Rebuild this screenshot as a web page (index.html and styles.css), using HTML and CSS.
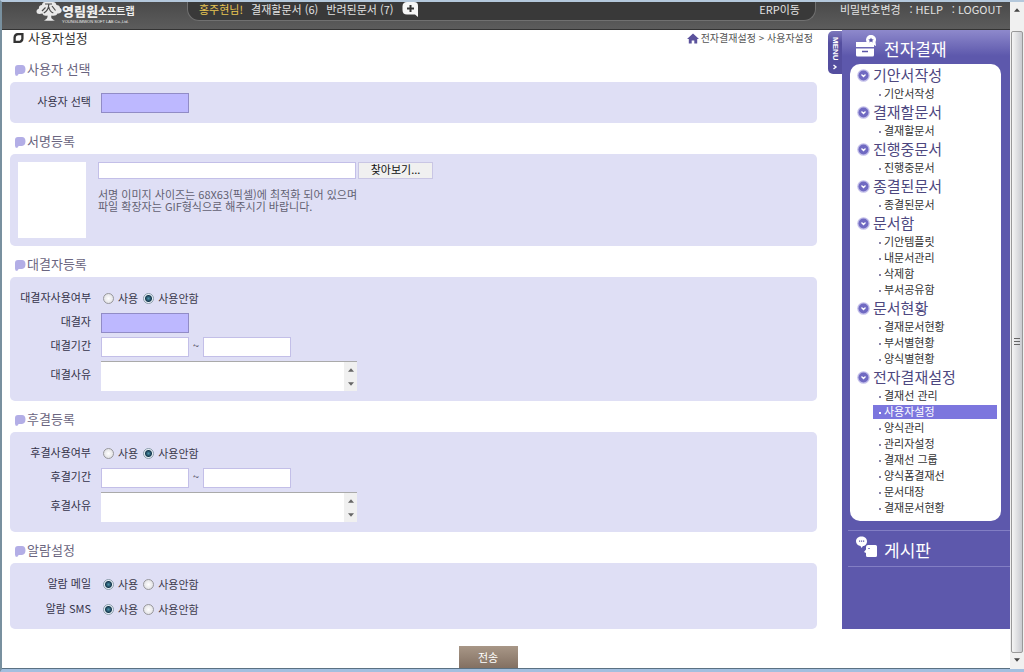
FILE: index.html
```html
<!DOCTYPE html>
<html lang="ko">
<head>
<meta charset="utf-8">
<title>사용자설정</title>
<link rel="stylesheet" href="styles.css">
</head>
<body>
<svg class="defs" aria-hidden="true">
  <symbol id="bubble" viewBox="0 0 12 12"><path d="M4 1h4c2 0 3.500 1.500 3.500 4.300S10 10 8 10H5.500c-1 0-1.600.4-2.200 2L1.500 11.500 1 9.500V4c0-2 1-3 3-3z" fill="#b3aee6"/></symbol>
  <symbol id="chevron" viewBox="0 0 13 13"><circle cx="6.500" cy="6.500" r="6.300" fill="#c4c0ea"/><circle cx="6.500" cy="6.500" r="5" fill="#706ac2"/><path d="M4.500 5.500l2 2 2-2" fill="none" stroke="#fff" stroke-width="1.300"/></symbol>
  <symbol id="up" viewBox="0 0 7 4"><path d="M0 4L3.500 0 7 4z" fill="currentColor"/></symbol>
  <symbol id="down" viewBox="0 0 7 4"><path d="M0 0h7L3.500 4z" fill="currentColor"/></symbol>
</svg>
<div class="window">
  <div class="page">
    <header class="topbar">
      <a class="logo" href="#">
        <svg class="logo-tree" viewBox="0 0 26 20" aria-hidden="true"><path d="M9 0h8c2 0 3 1 3.500 3 2 0 3.500 1 3.500 3 1.500.5 2 2 1.500 3.500-.6 1.500-2 2-4 2-1 2-3 2.500-6 2-.7 2-.3 3.500 3.500 5-4 .3-8 .3-11 0 2.500-1 4-3 3.500-5-2.500.5-4.500 0-5-2C3 12.500.5 12 .5 9.500.5 8 1.500 7 3 6.500 2.500 4.500 4 3 6 3 6 1.500 7 0 9 0z" fill="#e9e9e9"/><path d="M9 2h7M12.800 2c0 4-1.500 7-5 9M12.800 5c.5 3 2 5 4.500 6M9.500 5.500L6 9M16 4l3.500 4.500" fill="none" stroke="#4b4b4b" stroke-width="1.200"/></svg>
        <span class="logo-words">
          <span class="logo-name"><b>영림원</b><span>소프트랩</span></span>
          <span class="logo-sub">YOUNGLIMWON SOFT LAB Co.,Ltd.</span>
        </span>
      </a>
      <div class="pill">
        <span class="user">홍주현님!</span>
        <a href="#">결재할문서 (6)</a>
        <a href="#">반려된문서 (7)</a>
        <button class="add" type="button" aria-label="추가"><svg viewBox="0 0 17 15"><path d="M5 0h7c3 0 4 1.500 4 4v11l-3-2.500H5C2 12.500.500 11 .500 8V4.500C.500 1.500 2 0 5 0z" fill="#f6f6f6"/><path d="M8.500 3v7M5 6.500h7" stroke="#333" stroke-width="2"/></svg></button>
        <a class="erp" href="#">ERP이동</a>
      </div>
      <nav class="account"><a href="#">비밀번호변경</a><span><span>: </span><a href="#">HELP</a></span><span><span>: </span><a href="#">LOGOUT</a></span></nav>
    </header>

    <div class="columns">
      <main class="content">
        <div class="title-row">
          <h1><svg viewBox="0 0 12 12" aria-hidden="true"><path d="M5 .500h6.500v6C11.500 9.500 9.500 11.500 7 11.500H.500V5.500C.500 2.500 2.500.500 5 .500z" fill="#333"/><path d="M6 3h3v3.200C9 7.800 7.800 9 6.200 9H3V6c0-1.800 1.200-3 3-3z" fill="#fff"/></svg>사용자설정</h1>
          <nav class="crumbs"><svg viewBox="0 0 12 11" aria-hidden="true"><path d="M6 .500L12 6h-1.800v4.500H7.300V7.500H4.700v3H1.800V6H0z" fill="#5b529c"/></svg><a href="#">전자결재설정</a> &gt; <a href="#">사용자설정</a></nav>
        </div>

        <form id="settings">
          <h2><svg aria-hidden="true"><use href="#bubble"/></svg>사용자 선택</h2>
          <section class="panel rows single">
            <div class="row"><label class="name" for="user">사용자 선택</label><input class="text picker" id="user" type="text"></div>
          </section>

          <h2><svg aria-hidden="true"><use href="#bubble"/></svg>서명등록</h2>
          <section class="panel sign">
            <div class="preview"></div>
            <div class="upload">
              <div class="file"><input class="text path" type="text" aria-label="서명 파일"><button class="browse" type="button">찾아보기...</button></div>
              <p>서명 이미지 사이즈는 68X63(픽셀)에 최적화 되어 있으며<br>파일 확장자는 GIF형식으로 해주시기 바랍니다.</p>
            </div>
          </section>

          <h2><svg aria-hidden="true"><use href="#bubble"/></svg>대결자등록</h2>
          <section class="panel rows">
            <div class="row"><span class="name">대결자사용여부</span><div class="choices"><label><input type="radio" name="deputy">사용</label><label><input type="radio" name="deputy" checked>사용안함</label></div></div>
            <div class="row"><label class="name" for="deputy-user">대결자</label><input class="text picker" id="deputy-user" type="text"></div>
            <div class="row"><label class="name" for="deputy-from">대결기간</label><div class="period"><input class="text" id="deputy-from" type="text"><span>~</span><input class="text" type="text" aria-label="대결기간 종료"></div></div>
            <div class="row"><label class="name" for="deputy-why">대결사유</label><div class="memo"><textarea id="deputy-why"></textarea><span class="memo-bar" aria-hidden="true"><svg><use href="#up"/></svg><svg><use href="#down"/></svg></span></div></div>
          </section>

          <h2><svg aria-hidden="true"><use href="#bubble"/></svg>후결등록</h2>
          <section class="panel rows">
            <div class="row"><span class="name">후결사용여부</span><div class="choices"><label><input type="radio" name="post">사용</label><label><input type="radio" name="post" checked>사용안함</label></div></div>
            <div class="row"><label class="name" for="post-from">후결기간</label><div class="period"><input class="text" id="post-from" type="text"><span>~</span><input class="text" type="text" aria-label="후결기간 종료"></div></div>
            <div class="row"><label class="name" for="post-why">후결사유</label><div class="memo"><textarea id="post-why"></textarea><span class="memo-bar" aria-hidden="true"><svg><use href="#up"/></svg><svg><use href="#down"/></svg></span></div></div>
          </section>

          <h2><svg aria-hidden="true"><use href="#bubble"/></svg>알람설정</h2>
          <section class="panel rows">
            <div class="row"><span class="name">알람 메일</span><div class="choices"><label><input type="radio" name="mail" checked>사용</label><label><input type="radio" name="mail">사용안함</label></div></div>
            <div class="row"><span class="name">알람 SMS</span><div class="choices"><label><input type="radio" name="sms" checked>사용</label><label><input type="radio" name="sms">사용안함</label></div></div>
          </section>
        </form>
      </main>

      <button class="menu-tab" type="button">MENU <svg viewBox="0 0 6 6" aria-hidden="true"><path d="M1.500 1L4 3 1.500 5" fill="none" stroke="#fff" stroke-width="1.400"/></svg></button>

      <aside class="sidebar">
        <h2 class="side-title"><svg viewBox="0 0 22 22" aria-hidden="true"><path d="M1 7h12v2h6v3H1zM1 13.500h18V20a1.500 1.500 0 0 1-1.500 1.500h-15A1.500 1.500 0 0 1 1 20z" fill="#fff"/><path d="M7 16.500h6" stroke="#5c57a8" stroke-width="1.500"/><path d="M11 5a5 5 0 1 1 9.500 2l.500 4-3-1.500A5 5 0 0 1 11 5z" fill="#fff"/><path d="M16 2.500l.8 1.700 1.900.2-1.400 1.300.4 1.900-1.700-1-1.700 1 .4-1.900-1.400-1.300 1.900-.2z" fill="#5c57a8"/></svg>전자결재</h2>
        <nav class="tree">
          <h3><svg aria-hidden="true"><use href="#chevron"/></svg><span>기안서작성</span></h3>
          <ul><li><a href="#">기안서작성</a></li></ul>
          <h3><svg aria-hidden="true"><use href="#chevron"/></svg><span>결재할문서</span></h3>
          <ul><li><a href="#">결재할문서</a></li></ul>
          <h3><svg aria-hidden="true"><use href="#chevron"/></svg><span>진행중문서</span></h3>
          <ul><li><a href="#">진행중문서</a></li></ul>
          <h3><svg aria-hidden="true"><use href="#chevron"/></svg><span>종결된문서</span></h3>
          <ul><li><a href="#">종결된문서</a></li></ul>
          <h3><svg aria-hidden="true"><use href="#chevron"/></svg><span>문서함</span></h3>
          <ul><li><a href="#">기안템플릿</a></li><li><a href="#">내문서관리</a></li><li><a href="#">삭제함</a></li><li><a href="#">부서공유함</a></li></ul>
          <h3><svg aria-hidden="true"><use href="#chevron"/></svg><span>문서현황</span></h3>
          <ul><li><a href="#">결재문서현황</a></li><li><a href="#">부서별현황</a></li><li><a href="#">양식별현황</a></li></ul>
          <h3><svg aria-hidden="true"><use href="#chevron"/></svg><span>전자결재설정</span></h3>
          <ul><li><a href="#">결재선 관리</a></li><li><a class="current" href="#">사용자설정</a></li><li><a href="#">양식관리</a></li><li><a href="#">관리자설정</a></li><li><a href="#">결재선 그룹</a></li><li><a href="#">양식폼결재선</a></li><li><a href="#">문서대장</a></li><li><a href="#">결재문서현황</a></li></ul>
        </nav>
        <h2 class="side-title board"><svg viewBox="0 0 22 22" aria-hidden="true"><path d="M6.500.500c3 0 5.500 2 5.500 4.700S10 10 8 10l-1.500 2L5.500 10C3 9.500 1 8 1 5.200S3.500.500 6.500.500z" fill="#fff"/><path d="M4 5.200h1.200M6 5.200h1.200M8 5.200h1.200" stroke="#5c57a8" stroke-width="1.300"/><path d="M13 9h7.500A1.500 1.500 0 0 1 22 10.500v9a1.500 1.500 0 0 1-1.500 1.500h-8a1.500 1.500 0 0 1-1.500-1.500V17l-2-1 2-2.500V11a2 2 0 0 1 2-2z" fill="#fff"/><path d="M13 12.500h2" stroke="#8d88c8"/></svg>게시판</h2>
      </aside>
    </div>

    <div class="submit"><button type="submit" form="settings">전송</button></div>
  </div>

  <div class="scrollbar" aria-hidden="true">
    <svg><use href="#up"/></svg>
    <div class="thumb"><i></i></div>
    <svg><use href="#down"/></svg>
  </div>
</div>
</body>
</html>
```

FILE: styles.css
```css
* { box-sizing: border-box; }

body {
  margin: 0;
  background: #fff;
  color: #3c3a4c;
  font: 11px/16px "Noto Sans CJK KR", sans-serif;
}

h1, h2, h3, p, ul { margin: 0; padding: 0; font-weight: 400; }
ul { list-style: none; }
a { color: inherit; text-decoration: none; }
button, input, textarea { margin: 0; padding: 0; font: inherit; color: inherit; }
svg { display: block; flex: none; }
.defs { display: none; }

.window {
  display: flex;
  min-height: 100vh;
  border-top: 2px solid #b4c8dc;
  border-left: 2px solid #78909f;
  border-bottom: 3px solid #a3bfdf;
}

.page {
  flex: 1;
  min-width: 0;
  display: flex;
  flex-direction: column;
  border-bottom: 1px solid #5b7183;
}

/* Top bar */
.topbar {
  display: flex;
  align-items: flex-start;
  height: 28px;
  padding-right: 8px;
  background: linear-gradient(#4a4a4a, #5c5c5c);
  border-bottom: 1px solid #333;
  color: #e2e2e2;
  overflow: hidden;
}

.logo { display: flex; width: 185px; padding-left: 34px; flex: none; }
.logo-tree { width: 26px; height: 20px; }
.logo-words { display: flex; flex-direction: column; margin-top: -3px; color: #eee; white-space: nowrap; }
.logo-name { display: flex; align-items: flex-end; line-height: 17px; font-weight: 700; }
.logo-name b { font-size: 13px; }
.logo-name span { padding-top: 3px; font-size: 10px; }
.logo-sub { font: 4px/6px "Liberation Sans", sans-serif; }

.pill {
  flex: 1;
  display: flex;
  align-items: center;
  gap: 8px;
  height: 19px;
  padding: 0 15px 4px 11px;
  background: #393939;
  border: 1px solid #707070;
  border-top: 0;
  border-radius: 0 0 12px 12px;
}
.user { color: #e8c552; }
.add { width: 17px; height: 15px; border: 0; background: none; }
.erp { margin-left: auto; }
.account { display: flex; justify-content: space-between; width: 162px; margin-left: 24px; flex: none; line-height: 15px; }

/* Columns */
.columns { display: flex; align-items: stretch; }
.content { flex: 1; min-width: 0; padding-left: 8px; }

.title-row { display: flex; justify-content: space-between; height: 21px; padding-right: 4px; }
h1 { display: flex; align-items: center; gap: 4px; height: 16px; padding-left: 3px; font-size: 13px; color: #333; }
h1 svg { width: 11px; height: 12px; }
.crumbs { font-size: 10px; color: #555; white-space: pre; display: flex; align-items: center; height: 16px; }
.crumbs svg { width: 12px; height: 11px; margin-right: 2px; }

.content h2 {
  display: flex;
  align-items: center;
  gap: 1px;
  height: 31px;
  padding: 5px 0 1px 4px;
  font-size: 13px;
  color: #6a6580;
}
.content h2 svg { width: 12px; height: 12px; margin-top: 2px; }

.panel { background: #dfdff5; border-radius: 5px; }
.rows { display: flex; flex-direction: column; gap: 4px; padding: 12px 0 10px; }
.rows:last-child { gap: 5px; padding-bottom: 9px; }
.single { padding: 11px 0 10px; }
.row { display: grid; grid-template-columns: 81px 1fr; column-gap: 10px; align-items: center; }
.name { padding-bottom: 4px; text-align: right; color: #35334a; white-space: nowrap; }

.text { width: 88px; height: 20px; border: 1px solid #c3bfe8; background: #fff; }
.picker { background: #bdb8ff; border-color: #918cc6; }
.period { display: flex; }
.period span { width: 14px; text-align: center; }

.choices { display: flex; align-items: center; gap: 5px; height: 20px; padding: 0 0 2px 2px; }
.choices label { display: flex; align-items: center; gap: 4px; }
.choices input {
  appearance: none;
  width: 11px;
  height: 11px;
  border: 1px solid #98989c;
  border-radius: 50%;
  background: radial-gradient(#fff, #d8d8dc);
}
.choices input:checked { border-color: #8b9dab; background: radial-gradient(circle, #4d94ab 0, #173a50 3px, #e8f0f6 4px); }

.memo { display: flex; width: 256px; height: 30px; border-top: 1px solid #aaa; }
.memo textarea { flex: 1; border: 0; resize: none; background: #fff; overflow: hidden; }
.memo-bar {
  display: flex;
  flex-direction: column;
  align-items: center;
  justify-content: space-between;
  width: 13px;
  padding: 6px 0 5px;
  background: #f0f0f0;
  color: #666;
}
.memo-bar svg { width: 6px; height: 4px; }

.sign { display: flex; gap: 12px; padding: 8px; }
.preview { width: 68px; height: 76px; background: #fff; }
.file { display: flex; gap: 2px; }
.path { width: 258px; height: 17px; }
.browse { display: flex; justify-content: center; width: 75px; height: 17px; border: 1px solid #c9c6e4; background: #f0f0f0; color: #111; line-height: 12px; }
.upload p { margin-top: 9px; line-height: 12px; color: #625f72; }

.menu-tab {
  display: flex;
  align-items: center;
  align-self: flex-start;
  gap: 3px;
  width: 14px;
  height: 43px;
  margin: 1px 0 0 11px;
  padding-top: 6px;
  border: 0;
  border-radius: 5px 0 0 5px;
  background: linear-gradient(#7d78bc, #544e9f 12px);
  color: #fff;
  font: 700 8px/14px "Liberation Sans", sans-serif;
  writing-mode: vertical-rl;
  white-space: nowrap;
}
.menu-tab svg { width: 6px; height: 6px; }

/* Sidebar */
.sidebar { width: 168px; flex: none; background: linear-gradient(#8e89cc, #5d58ac 26px); }
.side-title { display: flex; align-items: center; gap: 7px; height: 34px; padding: 3px 0 0 13px; font-size: 17px; color: #fff; }
.side-title svg { width: 22px; height: 22px; margin-top: -6px; }
.board { height: 37px; margin: 9px 0 0 6px; padding-left: 7px; border: solid #827ec4; border-width: 1px 0; }

.tree { margin: 0 9px 0 8px; padding: 1px 4px 5px 7px; background: #fff; border-radius: 10px; }
.tree h3 { display: flex; align-items: center; gap: 3px; height: 21px; font-size: 15px; color: #4d477f; }
.tree h3 svg { width: 13px; height: 13px; }
.tree h3 span { padding-bottom: 2px; }
.tree ul { margin-left: 16px; }
.tree li { display: flex; align-items: center; height: 16px; }
.tree a { flex: 1; display: flex; align-items: center; gap: 3px; height: 14px; padding: 0 0 1px 6px; line-height: 13px; color: #333; }
.tree a::before { content: ""; width: 2px; height: 2px; margin-top: 3px; background: #8883a8; }
.tree .current { background: #7c76de; color: #fff; }
.tree .current::before { background: #fff; }

.submit { display: flex; justify-content: center; margin-top: auto; padding: 17px 36px 0 0; }
.submit button { width: 59px; height: 22px; border: 0; background: linear-gradient(#a89787, #837062); color: #fff; line-height: 20px; }

/* Window scroll bar */
.scrollbar {
  display: flex;
  flex-direction: column;
  align-items: center;
  width: 14px;
  padding: 6px 0 7px;
  background: #f0f0f0;
  color: #444;
}
.scrollbar svg { width: 6px; height: 4px; }
.thumb {
  flex: 1;
  display: flex;
  align-items: center;
  justify-content: center;
  width: 12px;
  margin: 19px 0 5px;
  border: 1px solid #999;
  border-radius: 2px;
  background: linear-gradient(90deg, #f5f5f5, #c9cbd0);
}
.thumb i { width: 6px; height: 8px; background: repeating-linear-gradient(#666 0 1px, transparent 1px 3px); }
```
